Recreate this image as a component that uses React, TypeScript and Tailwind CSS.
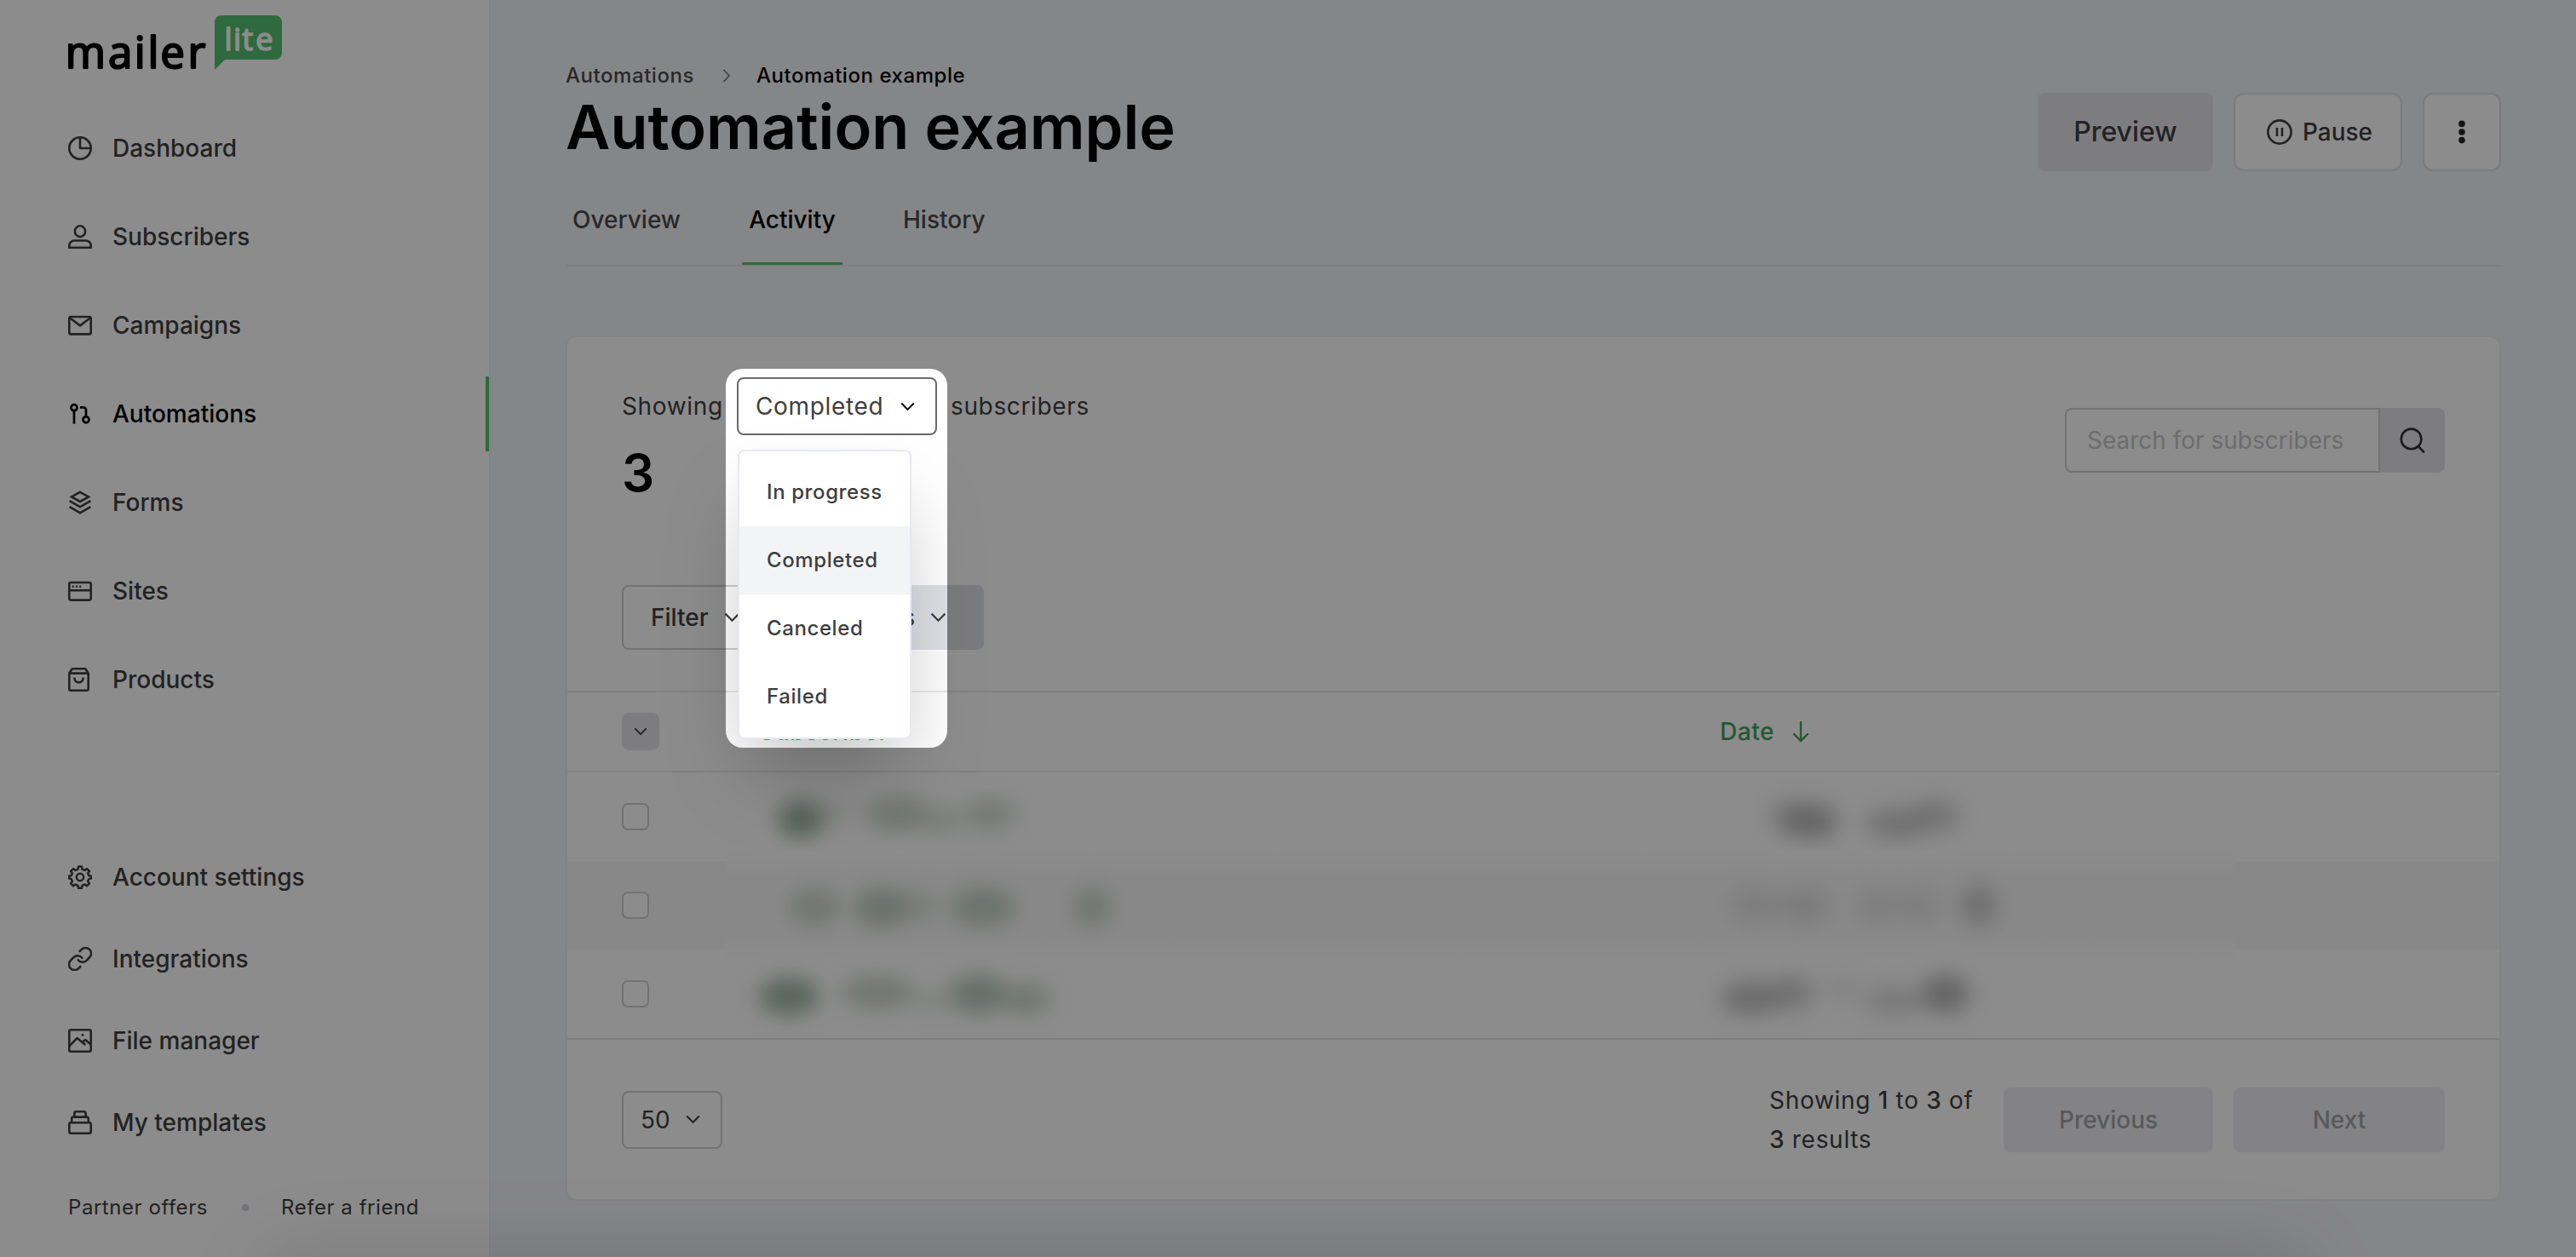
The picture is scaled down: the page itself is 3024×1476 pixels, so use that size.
import React from "react";

type IconProps = { className?: string };

const Svg = ({
  className = "size-7",
  children,
  box = "0 0 28 28",
  width = 2.6,
}: {
  className?: string;
  children: React.ReactNode;
  box?: string;
  width?: number;
}) => (
  <svg
    viewBox={box}
    className={className}
    fill="none"
    stroke="currentColor"
    strokeWidth={width}
    strokeLinejoin="round"
  >
    {children}
  </svg>
);

const DashboardIcon = () => (
  <Svg>
    <circle cx="14" cy="14" r="12.7" />
    <path d="M14 1.3V14H26.7" />
  </Svg>
);

const SubscribersIcon = () => (
  <Svg>
    <ellipse cx="14" cy="7.7" rx="6.1" ry="6.4" />
    <path d="M1.3 26.7v-2.2a6 6 0 0 1 6-6h13.4a6 6 0 0 1 6 6v2.2z" strokeLinejoin="miter" />
  </Svg>
);

const CampaignsIcon = () => (
  <Svg>
    <rect x="1.3" y="4" width="25.4" height="20.4" rx="2" />
    <path d="M2 5.2 14 14.4 26 5.2" />
  </Svg>
);

const AutomationsIcon = () => (
  <Svg width={2.7}>
    <circle cx="7" cy="6.7" r="3.5" />
    <path d="M7 10.2V25.6" />
    <circle cx="21" cy="20.8" r="3.5" />
    <path d="M21 17.3V9.4a3 3 0 0 0-3-3h-4" />
  </Svg>
);

const FormsIcon = () => (
  <Svg>
    <path d="M14 1.8 24 7.4 14 13 4 7.4z" strokeLinejoin="miter" />
    <path d="M1.6 12.2 14 19.2l12.4-7M1.6 19.2 14 26.2l12.4-7" strokeLinejoin="miter" />
  </Svg>
);

const SitesIcon = () => (
  <Svg>
    <rect x="1.3" y="4" width="25.4" height="20.6" rx="2" />
    <path d="M1.3 13.2h25.4" />
    <path d="M4.8 8.8h2M9 8.8h2M13.2 8.8h2" />
  </Svg>
);

const ProductsIcon = () => (
  <Svg>
    <path d="M1.3 6.4v18.3a2 2 0 0 0 2 2h18.4a2 2 0 0 0 2-2V6.4L20.2 1.3H4.8z" />
    <path d="M1.3 6.6h22.4M7.4 11.4v.8a5.1 5.1 0 0 0 10.2 0v-.8" />
  </Svg>
);

const SettingsIcon = () => (
  <Svg width={2.5}>
    <path d="M11.6 4.5 12 1.6h4l.4 2.9 3.2 1.4 2.4-1.8 2.9 2.9-1.8 2.4 1.3 2.8 2.4.4v3l-2.6.6-1.1 2.8 1.8 2.4-2.9 2.9-2.4-1.8-3.2 1.4-.4 2.9h-4l-.4-2.9-3.2-1.4L6 24.3l-2.9-2.9L4.9 19l-1.1-2.8-2.6-.6v-3l2.4-.4 1.3-2.8L3.1 7 6 4.1l2.4 1.8z" />
    <circle cx="14" cy="14" r="4.2" />
  </Svg>
);

const IntegrationsIcon = () => (
  <Svg box="0 0 24 24" width={2.2}>
    <path
      strokeLinecap="round"
      d="M10 13a5.6 5.6 0 0 0 8.4.6l3.1-3.1a5.6 5.6 0 0 0-8-8l-1.8 1.8M14 11a5.6 5.6 0 0 0-8.4-.6l-3.1 3.1a5.6 5.6 0 0 0 8 8l1.8-1.8"
    />
  </Svg>
);

const FileManagerIcon = () => (
  <Svg>
    <rect x="1.3" y="1.3" width="25.4" height="25.4" rx="2" />
    <path d="M2 19.6 10.6 11l9.8 8M16.4 16l3.8-3 6.2 5.2" />
    <circle cx="17" cy="7.4" r="1.4" fill="currentColor" stroke="none" />
  </Svg>
);

const TemplatesIcon = () => (
  <Svg>
    <rect x="1.3" y="14.2" width="25.4" height="12.5" rx="2" />
    <path d="M4.2 14V9.4a1.8 1.8 0 0 1 1.8-1.8h16a1.8 1.8 0 0 1 1.8 1.8V14" />
    <path d="M7.4 7.4V3.1a1.8 1.8 0 0 1 1.8-1.8h9.6a1.8 1.8 0 0 1 1.8 1.8v4.3" />
  </Svg>
);

const Chevron = ({ className = "w-[17px] h-[11px]" }: IconProps) => (
  <svg viewBox="0 0 17 11" className={className} fill="none" stroke="currentColor" strokeWidth="2">
    <path d="M1.2 1.5 8.5 8.9l7.3-7.4" />
  </svg>
);

const navItems = [
  { label: "Dashboard", icon: DashboardIcon },
  { label: "Subscribers", icon: SubscribersIcon },
  { label: "Campaigns", icon: CampaignsIcon },
  { label: "Automations", icon: AutomationsIcon, active: true },
  { label: "Forms", icon: FormsIcon },
  { label: "Sites", icon: SitesIcon },
  { label: "Products", icon: ProductsIcon },
];

const bottomItems = [
  { label: "Account settings", icon: SettingsIcon },
  { label: "Integrations", icon: IntegrationsIcon },
  { label: "File manager", icon: FileManagerIcon },
  { label: "My templates", icon: TemplatesIcon },
];

// Redacted table values: soft ellipses inside a 104px tall cell.
type Blob = { x: number; y: number; rx: number; ry: number; o: number };

const rows: { name: Blob[]; date: Blob[] }[] = [
  {
    name: [
      { x: 48, y: 55, rx: 27, ry: 22, o: 0.95 },
      { x: 90, y: 48, rx: 26, ry: 16, o: 0.15 },
      { x: 162, y: 49, rx: 36, ry: 20, o: 0.48 },
      { x: 214, y: 56, rx: 26, ry: 16, o: 0.32 },
      { x: 270, y: 49, rx: 30, ry: 19, o: 0.4 },
    ],
    date: [
      { x: 78, y: 52, rx: 22, ry: 22, o: 0.35 },
      { x: 106, y: 57, rx: 32, ry: 22, o: 0.7 },
      { x: 206, y: 60, rx: 36, ry: 19, o: 0.5 },
      { x: 252, y: 51, rx: 28, ry: 21, o: 0.45 },
    ],
  },
  {
    name: [
      { x: 64, y: 54, rx: 29, ry: 21, o: 0.45 },
      { x: 142, y: 55, rx: 31, ry: 22, o: 0.58 },
      { x: 184, y: 53, rx: 28, ry: 17, o: 0.28 },
      { x: 262, y: 54, rx: 37, ry: 22, o: 0.55 },
      { x: 390, y: 54, rx: 22, ry: 21, o: 0.48 },
    ],
    date: [
      { x: 40, y: 52, rx: 30, ry: 21, o: 0.22 },
      { x: 98, y: 52, rx: 30, ry: 21, o: 0.26 },
      { x: 184, y: 52, rx: 25, ry: 20, o: 0.2 },
      { x: 232, y: 52, rx: 25, ry: 20, o: 0.22 },
      { x: 303, y: 52, rx: 21, ry: 23, o: 0.52 },
    ],
  },
  {
    name: [
      { x: 34, y: 55, rx: 35, ry: 22, o: 0.9 },
      { x: 138, y: 50, rx: 42, ry: 20, o: 0.48 },
      { x: 204, y: 60, rx: 26, ry: 15, o: 0.2 },
      { x: 256, y: 52, rx: 33, ry: 23, o: 0.66 },
      { x: 312, y: 58, rx: 29, ry: 19, o: 0.48 },
    ],
    date: [
      { x: 36, y: 57, rx: 36, ry: 21, o: 0.6 },
      { x: 84, y: 51, rx: 24, ry: 21, o: 0.5 },
      { x: 142, y: 46, rx: 22, ry: 14, o: 0.18 },
      { x: 204, y: 60, rx: 38, ry: 18, o: 0.35 },
      { x: 264, y: 52, rx: 28, ry: 23, o: 0.75 },
    ],
  },
];

const Redacted = ({ blobs, color }: { blobs: Blob[]; color: string }) => (
  <svg
    viewBox="0 0 480 104"
    className="relative block h-[104px] w-[480px] overflow-visible blur-[12px]"
    fill={color}
  >
    {blobs.map((b) => (
      <ellipse key={b.x} cx={b.x} cy={b.y} rx={b.rx} ry={b.ry} opacity={b.o} />
    ))}
  </svg>
);

const Logo = () => (
  <svg viewBox="0 0 264 80" className="block h-20 w-[264px] overflow-visible">
    <text
      x="-1.2 48.9 79.8 95.6 110.2 142.6"
      y="70"
      fill="#000"
      stroke="#000"
      strokeWidth="2.2"
      strokeLinejoin="round"
      className="font-['Open_Sans'] text-[51px] font-normal"
    >
      mailer
    </text>
    <path d="M182 8h63a8 8 0 0 1 8 8v36a8 8 0 0 1-8 8h-59l-12 12V16a8 8 0 0 1 8-8z" fill="#54c270" />
    <text
      x="185.4 196.1 206.3 222.3"
      y="48.5"
      fill="#fff"
      stroke="#fff"
      strokeWidth="1.6"
      strokeLinejoin="round"
      className="font-['Open_Sans'] text-[36px] font-normal"
    >
      lite
    </text>
  </svg>
);

const Sidebar = () => (
  <aside className="flex w-[574px] shrink-0 flex-col bg-white pt-2.5 text-[#3e3e40]">
    <div className="h-[120px] pl-[78px]">
      <Logo />
    </div>
    <nav className="flex flex-col gap-4">
      {navItems.map(({ label, icon: Icon, active }) => (
        <a
          key={label}
          className={`flex h-[88px] items-center gap-6 pl-20 text-[28px] font-medium ${
            active ? "border-r-4 border-[#54c270] text-black" : ""
          }`}
        >
          <Icon />
          {label}
        </a>
      ))}
    </nav>
    <nav className="mt-[140px] flex flex-col">
      {bottomItems.map(({ label, icon: Icon }) => (
        <a key={label} className="flex h-24 items-center gap-6 pl-20 text-[28px] font-medium">
          <Icon />
          {label}
        </a>
      ))}
    </nav>
    <div className="mt-9 flex items-center pl-20 text-2xl tracking-[0.023em]">
      <span className="w-[204px]">Partner offers</span>
      <span className="mr-[38px] size-2 rounded-full bg-[#cdd0d8]" />
      <span>Refer a friend</span>
    </div>
  </aside>
);

const Header = () => (
  <header>
    <div className="flex h-[206px] items-start justify-between">
      <div>
        <div className="mt-[75px] flex h-[28px] items-center text-2xl font-medium tracking-[0.023em] text-[#4a4a4c]">
          <span className="w-[184px]">Automations</span>
          <svg viewBox="0 0 10 16" className="mr-[30px] h-4 w-2.5" fill="none" stroke="#7d7d80" strokeWidth="1.8">
            <path d="m1.5 1 6.5 7-6.5 7" />
          </svg>
          <span className="text-black">Automation example</span>
        </div>
        <h1 className="text-[72px] leading-[92px] font-semibold text-black">Automation example</h1>
      </div>
      <div className="mt-[109px] flex gap-6 text-[#3e3e40]">
        <button className="h-[92px] w-[206px] rounded-lg bg-[#e4e4e8] text-[32px] font-medium">Preview</button>
        <button className="flex h-[92px] w-[198px] items-center justify-center gap-3 rounded-xl border-2 border-[#e0e1e4] bg-white pl-1 text-[28px] font-medium">
          <svg viewBox="0 0 30 30" className="size-[30px]" fill="none" stroke="currentColor" strokeWidth="2.6">
            <circle cx="15" cy="15" r="13.6" />
            <path d="M12 10v10M18 10v10" />
          </svg>
          Pause
        </button>
        <button className="flex h-[92px] w-[92px] items-center justify-center rounded-xl border-2 border-[#e0e1e4] bg-white">
          <svg viewBox="0 0 8 28" className="h-7 w-2" fill="#26262a">
            <circle cx="4" cy="4.4" r="3.8" />
            <circle cx="4" cy="14" r="3.8" />
            <circle cx="4" cy="23.6" r="3.8" />
          </svg>
        </button>
      </div>
    </div>
    <div className="flex h-[107px] gap-[65px] border-b-2 border-[#e7e9ec] text-[28px] font-medium text-[#4a4a4c]">
      <span className="w-[142px] pl-2 leading-[104px]">Overview</span>
      <span className="h-[105px] w-[118px] border-b-[3px] border-[#54c270] text-center leading-[104px] text-black">
        Activity
      </span>
      <span className="pl-1.5 leading-[104px]">History</span>
    </div>
  </header>
);

const Toolbar = () => (
  <div className="h-[415px] px-16">
    <div className="flex h-[179px] justify-between">
      <div className="pt-[47px]">
        <div className="flex items-center text-[28px] tracking-[0.023em] text-[#3e3e40]">
          <span className="w-[135px]">Showing</span>
          <button className="flex h-[68px] w-[235px] items-center justify-between rounded-lg border-2 border-[#6a6a6c] bg-white pr-6 pl-5 text-black">
            <span className="text-[#3e3e40]">Completed</span>
            <Chevron />
          </button>
          <span className="pl-4">subscribers</span>
        </div>
        <div className="mt-2 text-[60px] leading-[72px] font-semibold text-black">3</div>
      </div>
      <div className="mt-[83px] flex h-[76px]">
        <div className="flex w-[370px] items-center rounded-l-lg border-2 border-[#cfd0d3] pl-6 text-[28px] text-[#c6c6c9]">
          Search for subscribers
        </div>
        <div className="flex w-[76px] items-center justify-center rounded-r-lg bg-[#e4e4e8] text-[#303033]">
          <svg viewBox="0 0 30 30" className="size-[30px]" fill="none" stroke="currentColor" strokeWidth="2.6">
            <circle cx="13.6" cy="13.4" r="11.8" />
            <path d="m21.8 22 6.4 6.6" strokeLinecap="round" />
          </svg>
        </div>
      </div>
    </div>
    <div className="mt-[112px] flex gap-6 text-[28px] font-medium text-[#3e3e40]">
      <button className="flex h-[76px] w-[172px] items-center gap-[18px] rounded-lg border-2 border-[#cfd0d3] pl-8">
        Filter
        <Chevron className="h-3 w-[19px]" />
      </button>
      <button className="flex h-[76px] w-[229px] items-center justify-end gap-[18px] rounded-lg bg-[#e0e1e6] pr-11">
        Actions
        <Chevron className="h-3 w-[19px]" />
      </button>
    </div>
  </div>
);

const Table = () => (
  <div>
    <div className="flex h-24 items-center border-y-2 border-[#e8e9ec] px-16 text-[28px] font-medium tracking-[0.02em] text-[#43a05c]">
      <div className="flex size-11 items-center justify-center rounded-lg bg-[#e4e4e8] text-[#3e3e40]">
        <Chevron className="h-2.5 w-4" />
      </div>
      <span className="ml-[117px] w-[1128px]">Subscriber</span>
      <span>Date</span>
      <svg viewBox="0 0 20 26" className="ml-[21px] h-[26px] w-5" fill="none" stroke="currentColor" strokeWidth="2.4">
        <path d="M10 1v23M1.4 15.4 10 24l8.6-8.6" />
      </svg>
    </div>
    {rows.map((row, i) => (
      <div
        key={i}
        className={`relative flex h-[104px] items-center px-16 ${i === 1 ? "bg-[#f8f8f8]" : ""}`}
      >
        {i === 1 && (
          <div className="absolute -inset-y-3 left-[186px] w-[1772px] bg-[linear-gradient(#fff,#f8f8f8_30px,#f8f8f8_98px,#fff)]" />
        )}
        <div className="size-8 rounded-[7px] border-2 border-[#cfd0d3] bg-white" />
        <div className="ml-[130px] w-[1128px]">
          <Redacted blobs={row.name} color="#97b09b" />
        </div>
        <Redacted blobs={row.date} color="#a2a2a3" />
      </div>
    ))}
  </div>
);

const Pagination = () => (
  <div className="flex h-[189px] items-center justify-between border-t-2 border-[#e2e3e6] px-16 text-[28px]">
    <button className="flex h-[68px] w-[118px] items-center justify-between rounded-lg border-2 border-[#cfd0d3] pr-6 pl-5 text-[#3e3e40]">
      50
      <Chevron />
    </button>
    <div className="flex items-center gap-6">
      <p className="w-[251px] leading-[46px] tracking-[0.025em] text-[#3e3e40]">
        Showing <b className="font-medium">1</b> to <b className="font-medium">3</b> of <b className="font-medium">3</b>{" "}
        results
      </p>
      <button className="h-[76px] w-[246px] rounded-lg bg-[#efeff2] font-medium text-[#a2a2a5]">Previous</button>
      <button className="h-[76px] w-[248px] rounded-lg bg-[#efeff2] font-medium text-[#a2a2a5]">Next</button>
    </div>
  </div>
);

const StatusMenu = () => (
  <div className="absolute top-[528px] left-[866px] h-[340px] w-[204px] rounded-lg border-2 border-[#e8e9f0] bg-white pt-2 text-2xl font-medium tracking-[0.025em] text-[#3e3e40] shadow-[0_50px_100px_-16px_rgba(0,0,0,0.25)]">
    {["In progress", "Completed", "Canceled", "Failed"].map((label) => (
      <div
        key={label}
        className={`flex h-20 items-center pl-8 ${label === "Completed" ? "bg-[#f3f4f6]" : ""}`}
      >
        {label}
      </div>
    ))}
  </div>
);

const App = () => {
  return (
    <div className="relative flex h-[1476px] w-[3024px] overflow-hidden bg-[#f3f4f7] font-['Inter',sans-serif]">
      <Sidebar />
      <main className="flex-1 border-l-2 border-[#eceef1] pr-[88px] pl-[88px]">
        <Header />
        <section className="mt-[81px] h-[1016px] rounded-xl border-2 border-[#eceef1] bg-white">
          <Toolbar />
          <Table />
          <Pagination />
        </section>
      </main>
      <StatusMenu />
      {/* shade rising from the bottom edge */}
      <div className="absolute top-[1496px] left-[330px] h-10 w-[2360px] rounded-full shadow-[0_0_90px_30px_rgba(0,0,0,0.12)]" />
      {/* spotlight around the status filter */}
      <div className="absolute top-[433px] left-[852px] h-[445px] w-[260px] rounded-[20px] shadow-[0_0_0_3000px_rgba(0,0,0,0.45)]" />
    </div>
  );
};

export default App;
